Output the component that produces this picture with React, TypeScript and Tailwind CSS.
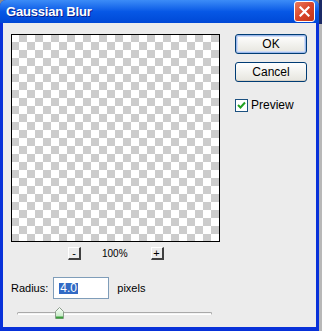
const checker =
  "bg-[conic-gradient(#cccccc_25%,#ffffff_0_50%,#cccccc_0_75%,#ffffff_0)] bg-[length:16px_16px] bg-[position:-1px_-1px]";

const SpinButton = ({ label }: { label: string }) => (
  <div className="w-[13px] h-[13px] flex items-center justify-center border-t border-l border-t-white border-l-white border-r-[2px] border-b-[2px] border-r-[#404040] border-b-[#404040] bg-[#ececec] text-[11px] leading-none text-black">
    {label}
  </div>
);

const XpButton = ({ label, isDefault }: { label: string; isDefault?: boolean }) => (
  <div
    className={
      "w-[72px] h-[20px] rounded-[3px] border border-[#003c74] flex items-center justify-center bg-gradient-to-b from-white to-[#e6e5de] text-[12px] text-black " +
      (isDefault ? "shadow-[inset_0_0_0_1px_#9cb9ec,inset_0_0_0_2px_#cfdcf5]" : "shadow-[inset_0_-1px_0_#d6d0c5]")
    }
  >
    {label}
  </div>
);

export default function App() {
  return (
    <div className="w-[322px] h-[331px] flex bg-[#8a8a8a] font-['Liberation_Sans',Arial,sans-serif] select-none">
      {/* dialog window */}
      <div className="w-[319px] h-[331px] flex flex-col rounded-t-[6px] overflow-hidden bg-[#0831d9]">
        {/* title bar */}
        <div className="h-[23px] flex items-center justify-between pl-[6px] pr-[4px] bg-gradient-to-b from-[#3c8cf7] via-[#0758e6] to-[#0048d6]">
          <span className="text-white font-bold text-[13px] tracking-[-0.2px] [text-shadow:1px_1px_0_#0a1e8c]">
            Gaussian Blur
          </span>
          <div className="w-[21px] h-[21px] rounded-[3px] border border-white bg-gradient-to-br from-[#e97a5c] via-[#d9452a] to-[#c23515] flex items-center justify-center">
            <svg width="11" height="11" viewBox="0 0 11 11">
              <path d="M1.5 1.5 L9.5 9.5 M9.5 1.5 L1.5 9.5" stroke="white" strokeWidth="2.2" strokeLinecap="square" />
            </svg>
          </div>
        </div>

        {/* body with frame */}
        <div className="flex-1 mx-[3px] mb-[4px] bg-[#ececec] flex pl-[8px] pt-[11px]">
          {/* left column */}
          <div className="w-[209px] flex flex-col">
            <div className={"w-[209px] h-[208px] border border-black " + checker} />

            <div className="flex items-center mt-[5px] h-[13px]">
              <div className="ml-[57px]">
                <SpinButton label="-" />
              </div>
              <span className="ml-[21px] text-[10px] text-black">100%</span>
              <div className="ml-[23px]">
                <SpinButton label="+" />
              </div>
            </div>

            <div className="flex items-center mt-[17px] h-[22px] text-[11px] text-black">
              <span>Radius:</span>
              <div className="ml-[5px] w-[56px] h-[22px] border border-[#7f9db9] bg-white flex items-center pl-[5px]">
                <span className="bg-[#316ac5] text-white text-[12px] leading-[11px] h-[11px] px-[1px]">4.0</span>
              </div>
              <span className="ml-[8px]">pixels</span>
            </div>

            <div className="relative mt-[8px] ml-[6px] w-[195px] h-[12px]">
              <div className="absolute left-0 right-0 top-[5px] h-[3px] rounded-full border border-[#a9a9a9] border-b-white bg-[#f4f4f4]" />
              <svg className="absolute left-[38px] top-0" width="9" height="12" viewBox="0 0 9 12">
                <defs>
                  <linearGradient id="th" x1="0" y1="0" x2="0" y2="1">
                    <stop offset="0" stopColor="#ffffff" />
                    <stop offset="1" stopColor="#b9e5b9" />
                  </linearGradient>
                </defs>
                <path d="M4.5 0.5 L8.5 4.5 L8.5 11.5 L0.5 11.5 L0.5 4.5 Z" fill="url(#th)" stroke="#8c9c8c" />
                <rect x="1" y="9.5" width="7" height="2" fill="#3aa03a" />
              </svg>
            </div>
          </div>

          {/* right column */}
          <div className="ml-[15px] flex flex-col">
            <XpButton label="OK" isDefault />
            <div className="mt-[8px]">
              <XpButton label="Cancel" />
            </div>
            <div className="mt-[14px] flex items-center gap-[3px] text-[12px] text-black">
              <div className="w-[13px] h-[13px] border border-[#1c5180] bg-white flex items-center justify-center">
                <svg width="9" height="9" viewBox="0 0 9 9">
                  <path d="M1 4 L3.5 6.5 L8 1.5" fill="none" stroke="#21a121" strokeWidth="2" />
                </svg>
              </div>
              <span>Preview</span>
            </div>
          </div>
        </div>
      </div>
      {/* background behind window */}
      <div className="flex-1 flex flex-col">
        <div className="h-[24px] bg-[#1b2a66]" />
        <div className="flex-1 bg-[#b8b8b8]" />
      </div>
    </div>
  );
}
